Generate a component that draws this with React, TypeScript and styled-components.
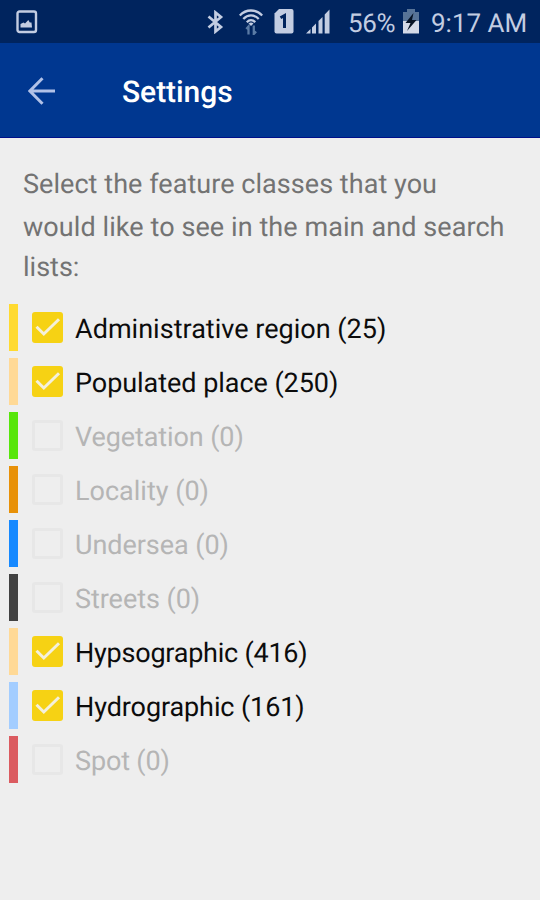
import React from "react";
import styled, { createGlobalStyle } from "styled-components";

const GlobalStyle = createGlobalStyle`
  * { box-sizing: border-box; }
  body { margin: 0; background: #eeeeee; }
`;

const Screen = styled.div`
  width: 540px;
  height: 900px;
  overflow: hidden;
  display: flex;
  flex-direction: column;
  background: #eeeeee;
  font-family: Roboto, sans-serif;
  text-rendering: geometricPrecision;
`;

const StatusBar = styled.div`
  height: 43px;
  flex: none;
  display: flex;
  align-items: center;
  padding: 0 13px 0 16px;
  background: #00245e;
  color: #c3cde2;
  svg { display: block; flex: none; }
`;

const StatusIcons = styled.div`
  margin-left: auto;
  display: flex;
  align-items: center;
`;

const StatusIcon = styled.span<{ $gap: number }>`
  display: block;
  margin-right: ${(p) => p.$gap}px;
`;

const StatusText = styled.span<{ $width: number; $spacing: number }>`
  width: ${(p) => p.$width}px;
  font-size: 26px;
  line-height: 30px;
  letter-spacing: ${(p) => p.$spacing}px;
  white-space: nowrap;
  padding-top: 4px;
`;

const AppBar = styled.header`
  height: 95px;
  flex: none;
  display: flex;
  align-items: center;
  padding: 0 28px;
  background: #003790;
  border-bottom: 1px solid #00108a;
`;

const BackButton = styled.button`
  width: 94px;
  padding: 1px 0 0;
  border: 0;
  background: none;
  svg { display: block; }
`;

const Title = styled.h1`
  margin: 5px 0 0;
  color: #ffffff;
  font-size: 30px;
  font-weight: 500;
  line-height: 36px;
  letter-spacing: -0.05px;
`;

const Intro = styled.p`
  margin: 25px 0 0 23px;
  color: #737373;
  font-size: 27px;
  white-space: nowrap;
`;

const Line = styled.span<{ $height: number; $spacing?: number }>`
  display: block;
  line-height: ${(p) => p.$height}px;
  letter-spacing: ${(p) => p.$spacing ?? 0}px;
`;

const List = styled.ul`
  list-style: none;
  margin: 18px 0 0;
  padding: 0 0 0 9px;
  display: flex;
  flex-direction: column;
  gap: 7px;
`;

const Row = styled.li`
  height: 47px;
  display: flex;
  align-items: center;
`;

const Swatch = styled.span<{ $color: string }>`
  width: 9px;
  height: 47px;
  margin-right: 14px;
  background: ${(p) => p.$color};
`;

const Box = styled.span<{ $on: boolean }>`
  width: 31px;
  height: 31px;
  margin: 0 12px 0 0;
  border-radius: 3px;
  border: ${(p) => (p.$on ? "0" : "3px solid #e7e7e7")};
  background: ${(p) => (p.$on ? "#f6d214" : "transparent")};
  svg { display: block; }
`;

const Label = styled.span<{ $on: boolean; $spacing: number }>`
  color: ${(p) => (p.$on ? "#0c0c0c" : "#b5b5b5")};
  font-size: 27px;
  line-height: 34px;
  letter-spacing: ${(p) => p.$spacing}px;
  padding-top: 3px;
  white-space: nowrap;
`;

const PictureIcon = () => (
  <svg width="22" height="24" viewBox="0 0 22 24" fill="none">
    <rect x="1.5" y="1.5" width="18.5" height="20.5" rx="2" stroke="currentColor" strokeWidth="2.4" />
    <path d="M4.5 17.500v-3.500l3-1.500 1.500 1 3.300-3.500 1.500 2.500h1.700l.500 5z" fill="currentColor" />
  </svg>
);

const BluetoothIcon = () => (
  <svg width="17" height="24" viewBox="0 0 17 24" fill="none" stroke="currentColor" strokeWidth="2.7">
    <path d="M1.500 6.500 14 17l-5.500 4.500v-19L14 7 1.500 17.500" />
  </svg>
);

const WifiIcon = () => (
  <svg width="24" height="26" viewBox="0 0 24 26" fill="none">
    <g stroke="currentColor" strokeWidth="2.3">
      <path d="M.8 6.5C7-.2 17-.2 23.2 6.5" />
      <path d="M4.3 10C8.8 5.2 15.2 5.2 19.7 10" />
      <path d="M7.8 13.2c2.6-2.7 5.800-2.700 8.400 0" />
    </g>
    <path d="M9.500 14.500a4 4 0 0 1 5 0L12 17z" fill="currentColor" />
    <g stroke="#5a7ba5" strokeWidth="2.300">
      <path d="M9.500 25.500v-8L7.300 20M14.800 16.500V25l2.300-2.500" />
    </g>
  </svg>
);

const SimIcon = () => (
  <svg width="20" height="25" viewBox="0 0 20 25">
    <path d="M5 0h12.500a2 2 0 0 1 2 2v20.500a2 2 0 0 1-2 2h-15a2 2 0 0 1-2-2V4.500z" fill="currentColor" />
    <path d="M6.500 8.800 10.500 6.500v12.500" fill="none" stroke="#00245e" strokeWidth="3" />
  </svg>
);

const SignalIcon = () => (
  <svg width="24" height="25" viewBox="0 0 24 25" fill="currentColor">
    <path d="M0 24.500 4.500 20v4.500zM6 18.500l4-4v10H6zM12.500 12l4-4v16.500h-4zM18.700 5.500 23.500.5v24h-4.800z" />
  </svg>
);

const BatteryIcon = () => (
  <svg width="16" height="25" viewBox="0 0 16 25">
    <path d="M0 3h4V0h8v3h4v10H0z" fill="#577397" />
    <path d="M0 12h16v12.500H0z" fill="#d3d9e7" />
    <path d="M10.500 4 2.500 14h5L4 22l9.500-11H9z" fill="#061326" />
  </svg>
);

const BackArrow = () => (
  <svg width="28" height="28" viewBox="0 0 28 28" fill="none" stroke="#b1c1e7" strokeWidth="3">
    <path d="M27 14H2M14.500 1.200 1.900 14l12.600 12.800" />
  </svg>
);

const Check = () => (
  <svg width="31" height="31" viewBox="0 0 31 31" fill="none" stroke="#f4f0dc" strokeWidth="3">
    <path d="m4.500 14.700 7.300 7.300L27 7.200" />
  </svg>
);

const classes = [
  { name: "Administrative region", count: 25, color: "#ffda30", spacing: 0.02 },
  { name: "Populated place", count: 250, color: "#ffd996", spacing: -0.05 },
  { name: "Vegetation", count: 0, color: "#57e60b", spacing: -0.1 },
  { name: "Locality", count: 0, color: "#e89108", spacing: 0 },
  { name: "Undersea", count: 0, color: "#1689ff", spacing: -0.05 },
  { name: "Streets", count: 0, color: "#424242", spacing: -0.05 },
  { name: "Hypsographic", count: 416, color: "#ffd996", spacing: -0.23 },
  { name: "Hydrographic", count: 161, color: "#a3cdff", spacing: -0.1 },
  { name: "Spot", count: 0, color: "#db5b60", spacing: -0.15 },
];

export default function App() {
  return (
    <Screen>
      <GlobalStyle />
      <StatusBar>
        <PictureIcon />
        <StatusIcons>
          <StatusIcon $gap={15}><BluetoothIcon /></StatusIcon>
          <StatusIcon $gap={11}><WifiIcon /></StatusIcon>
          <StatusIcon $gap={12}><SimIcon /></StatusIcon>
          <StatusIcon $gap={18}><SignalIcon /></StatusIcon>
          <StatusText $width={55} $spacing={-0.3}>56%</StatusText>
          <StatusIcon $gap={12}><BatteryIcon /></StatusIcon>
          <StatusText $width={96} $spacing={0}>9:17 AM</StatusText>
        </StatusIcons>
      </StatusBar>
      <AppBar>
        <BackButton aria-label="Back"><BackArrow /></BackButton>
        <Title>Settings</Title>
      </AppBar>
      <Intro>
        <Line $height={43} $spacing={0.05}>Select the feature classes that you</Line>
        <Line $height={42} $spacing={0.08}>would like to see in the main and search</Line>
        <Line $height={38}>lists:</Line>
      </Intro>
      <List>
        {classes.map((c) => (
          <Row key={c.name}>
            <Swatch $color={c.color} />
            <Box $on={c.count > 0}>{c.count > 0 && <Check />}</Box>
            <Label $on={c.count > 0} $spacing={c.spacing}>{`${c.name} (${c.count})`}</Label>
          </Row>
        ))}
      </List>
    </Screen>
  );
}
